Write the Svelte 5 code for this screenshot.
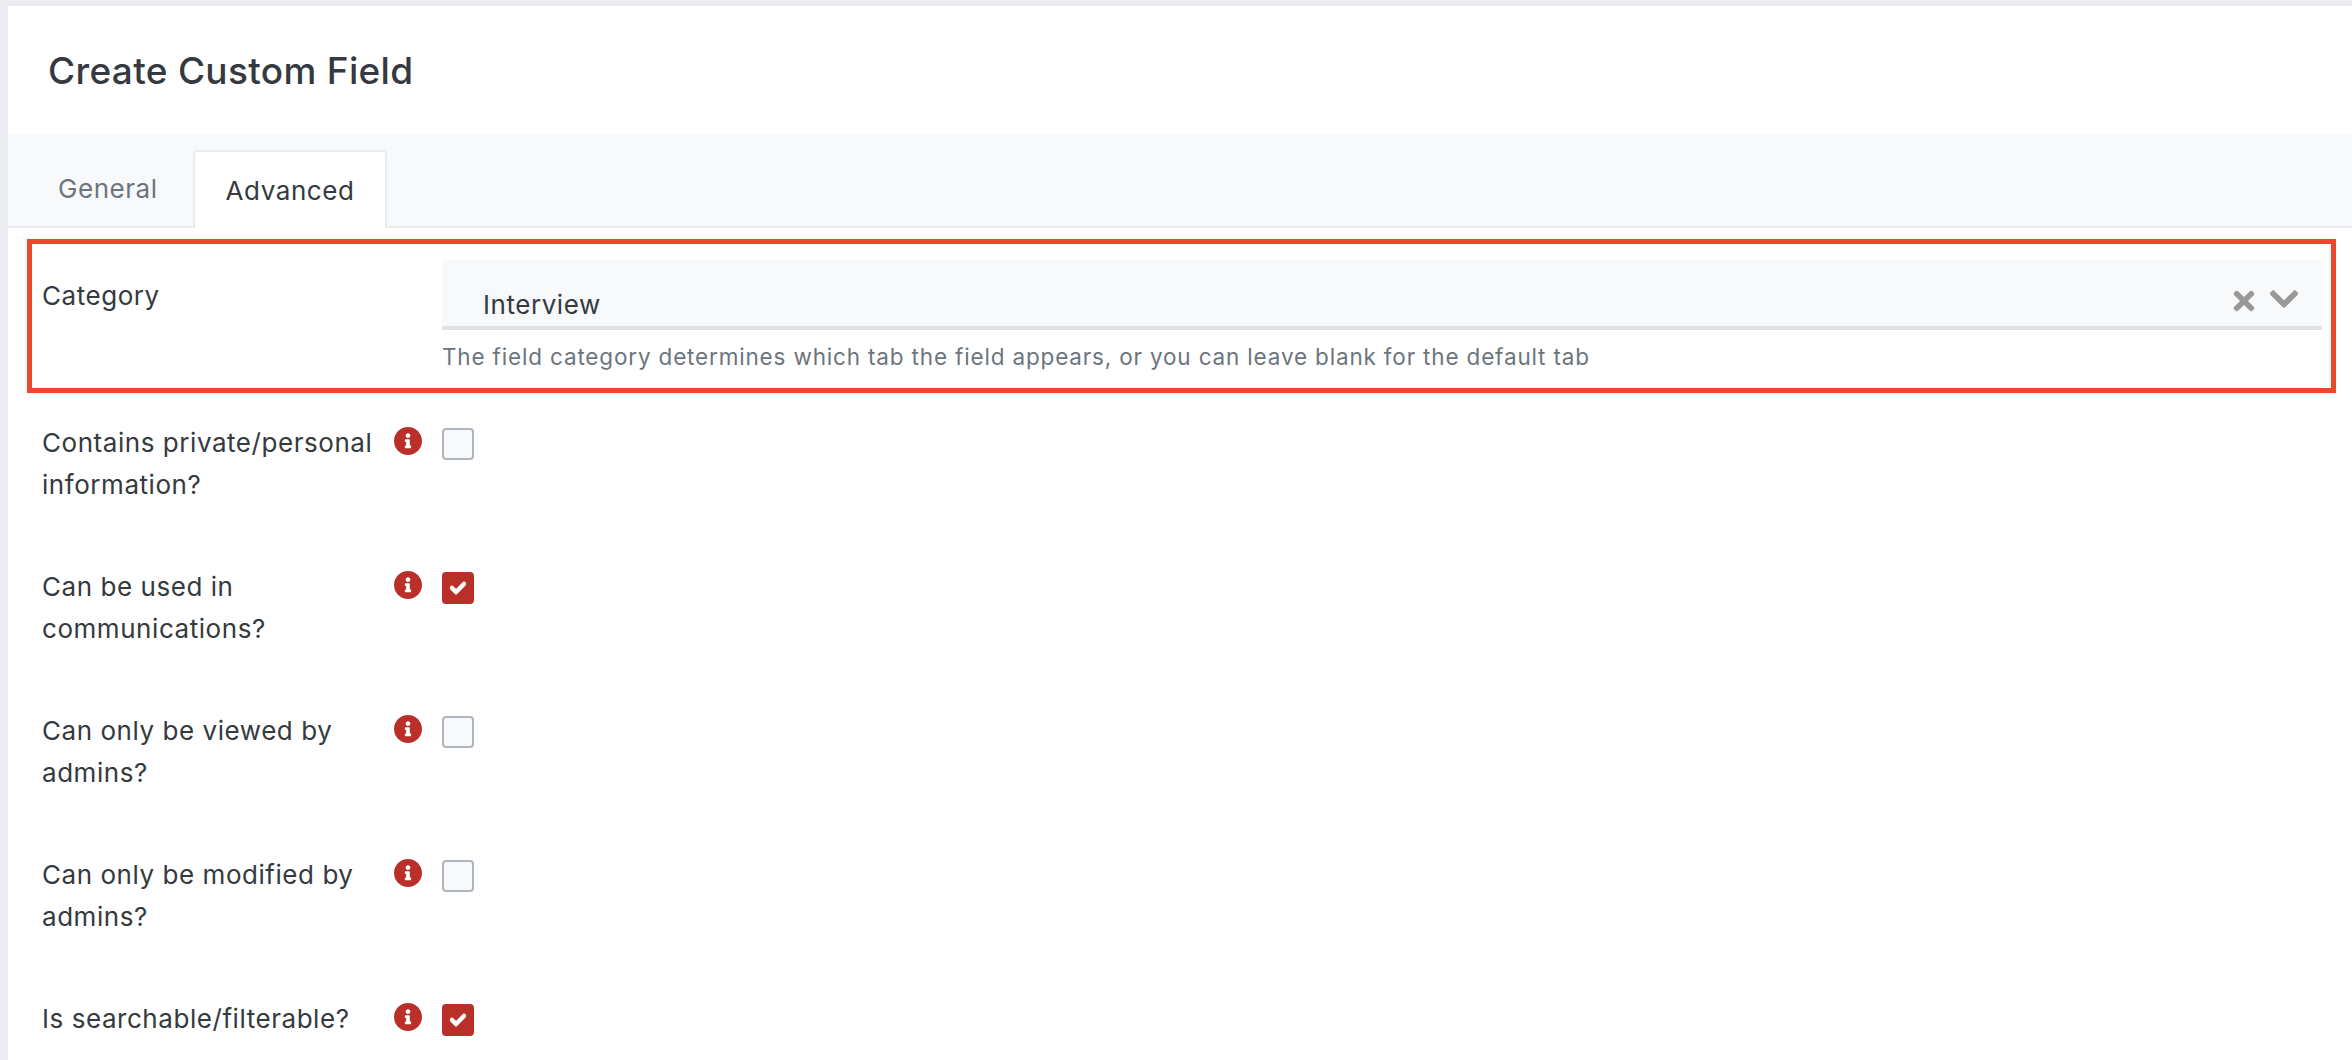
<script>
const rows = [
	{ label: 'Contains private/personal information?', checked: false },
	{ label: 'Can be used in communications?', checked: true },
	{ label: 'Can only be viewed by admins?', checked: false },
	{ label: 'Can only be modified by admins?', checked: false },
	{ label: 'Is searchable/filterable?', checked: true },
]
</script>

<div class="page">
	<div class="panel">
		<header>
			<h1>Create Custom Field</h1>
		</header>
		<nav>
			<div class="tab">General</div>
			<div class="tab active">Advanced</div>
		</nav>
		<section>
			<div class="highlight">
				<div class="cat-label">Category</div>
				<div class="cat-field">
					<div class="select">
						<span class="value">Interview</span>
						<svg class="clear" viewBox="0 0 352 512"><path d="M242.72 256l100.07-100.07c12.28-12.28 12.28-32.19 0-44.48l-22.24-22.24c-12.28-12.28-32.19-12.28-44.48 0L176 189.28 75.93 89.21c-12.28-12.28-32.19-12.28-44.48 0L9.21 111.45c-12.28 12.28-12.28 32.19 0 44.48L109.28 256 9.21 356.07c-12.28 12.28-12.28 32.19 0 44.48l22.24 22.24c12.28 12.28 32.2 12.28 44.48 0L176 322.72l100.07 100.07c12.28 12.28 32.2 12.28 44.48 0l22.24-22.24c12.28-12.28 12.28-32.19 0-44.48L242.72 256z"/></svg>
						<svg class="chevron" viewBox="0 0 448 512"><path d="M207.029 381.476L12.686 187.132c-9.373-9.373-9.373-24.569 0-33.941l22.667-22.667c9.357-9.357 24.522-9.375 33.901-.04L224 284.505l154.745-154.021c9.379-9.335 24.544-9.317 33.901.04l22.667 22.667c9.373 9.373 9.373 24.569 0 33.941L240.971 381.476c-9.373 9.372-24.569 9.372-33.942 0z"/></svg>
					</div>
					<div class="help">The field category determines which tab the field appears, or you can leave blank for the default tab</div>
				</div>
			</div>

			{#each rows as row}
				<div class="row">
					<div class="label">{row.label}</div>
					<svg class="info" viewBox="8 8 496 496"><path d="M256 8C119.043 8 8 119.083 8 256c0 136.997 111.043 248 248 248s248-111.003 248-248C504 119.083 392.957 8 256 8zm0 110c23.196 0 42 18.804 42 42s-18.804 42-42 42-42-18.804-42-42 18.804-42 42-42zm56 254c0 6.627-5.373 12-12 12h-88c-6.627 0-12-5.373-12-12v-24c0-6.627 5.373-12 12-12h12v-64h-12c-6.627 0-12-5.373-12-12v-24c0-6.627 5.373-12 12-12h64c6.627 0 12 5.373 12 12v100h12c6.627 0 12 5.373 12 12v24z"/></svg>
					<div class="check" class:on={row.checked}>
						{#if row.checked}
							<svg viewBox="0 0 512 512"><path d="M173.898 439.404l-166.4-166.4c-9.997-9.997-9.997-26.206 0-36.204l36.203-36.204c9.997-9.998 26.207-9.998 36.204 0L192 312.69 432.095 72.596c9.997-9.997 26.207-9.997 36.204 0l36.203 36.204c9.997 9.997 9.997 26.206 0 36.204l-294.4 294.401c-9.998 9.997-26.207 9.997-36.204-.001z"/></svg>
						{/if}
					</div>
				</div>
			{/each}
		</section>
	</div>
</div>

<style>
:global(body) {
	margin: 0;
}
.page {
	height: 1060px;
	overflow: hidden;
	background: #ebecf1;
	padding: 6px 0 0 8px;
	box-sizing: border-box;
	font-family: Inter, sans-serif;
	font-optical-sizing: none;
	color: #343a40;
}
.panel {
	background: #fff;
	height: 100%;
}
header {
	height: 128px;
	display: flex;
	align-items: center;
	padding-left: 40px;
}
h1 {
	margin: 0;
	font-size: 37px;
	font-weight: 500;
	letter-spacing: 0.32px;
}
nav {
	height: 92px;
	background: #f8f9fb;
	border-bottom: 2px solid #ebecf1;
	display: flex;
	align-items: flex-end;
	padding-left: 16px;
	box-sizing: content-box;
}
.tab {
	width: 169px;
	height: 76px;
	padding-left: 34px;
	display: flex;
	align-items: center;
	font-size: 26px;
	letter-spacing: 0.55px;
	color: #6c757d;
	box-sizing: border-box;
}
.tab.active {
	width: 194px;
	height: 78px;
	margin-bottom: -2px;
	justify-content: center;
	padding: 0;
	color: #343a40;
	background: #fff;
	border: 2px solid #ebecf1;
	border-bottom: 0;
	border-radius: 4px 4px 0 0;
}
.highlight {
	margin: 11px 16px 0 19px;
	height: 154px;
	border: 5px solid #ee4628;
	box-sizing: border-box;
	display: flex;
}
.cat-label {
	width: 410px;
	padding: 31px 0 0 10px;
	font-size: 26px;
	letter-spacing: 0.55px;
	line-height: 42px;
	box-sizing: border-box;
}
.cat-field {
	flex: 1;
	padding: 16px 9px 0 0;
}
.select {
	height: 70px;
	background: #f8f9fb;
	border-bottom: 4px solid #dfe1e7;
	box-sizing: border-box;
	position: relative;
	padding: 27px 0 0 41px;
	font-size: 26px;
	letter-spacing: 0.55px;
	line-height: 36px;
}
.clear {
	position: absolute;
	left: 1787px;
	top: 26px;
	width: 30px;
	height: 30px;
	fill: #999;
}
.chevron {
	position: absolute;
	left: 1826px;
	top: 23px;
	width: 32px;
	height: 32px;
	fill: #999;
	stroke: #999;
	stroke-width: 16px;
}
.help {
	margin-top: 12px;
	font-size: 22.5px;
	letter-spacing: 0.83px;
	line-height: 30px;
	color: #6c757d;
}
.row {
	display: flex;
	align-items: flex-start;
	height: 144px;
	padding-left: 34px;
}
.highlight + .row {
	margin-top: 28px;
}
.label {
	width: 352px;
	padding: 1px 12px 0 0;
	box-sizing: border-box;
	font-size: 26px;
	letter-spacing: 0.55px;
	line-height: 42px;
}
.info {
	width: 28px;
	height: 28px;
	margin: 6px 20px 0 0;
	fill: #b83028;
}
.check {
	width: 32px;
	height: 32px;
	margin-top: 7px;
	background: #f7f9fb;
	border: 2px solid #adb5c0;
	border-radius: 4px;
	box-sizing: border-box;
	display: flex;
	align-items: center;
	justify-content: center;
}
.check.on {
	background: #b83028;
	border-color: #b83028;
}
.check svg {
	width: 16px;
	height: 16px;
	fill: #fff;
	stroke: #fff;
	stroke-width: 36px;
}
</style>
